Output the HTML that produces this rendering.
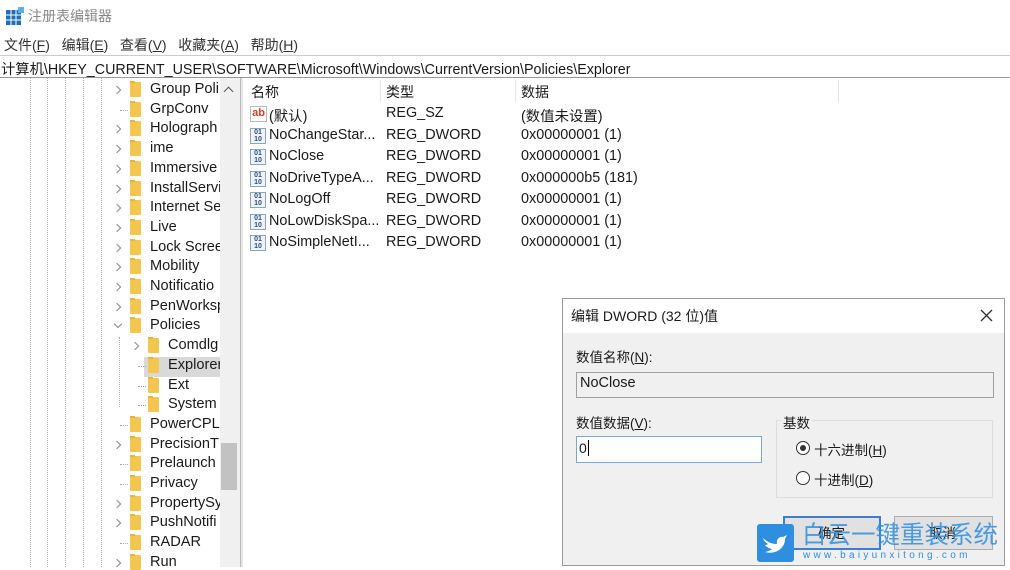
<!DOCTYPE html>
<html><head><meta charset="utf-8"><style>
*{margin:0;padding:0;box-sizing:border-box}
body{width:1010px;height:567px;overflow:hidden;background:#fff;font-family:"Liberation Sans","Noto Sans CJK SC",sans-serif;font-size:14px;color:#1a1a1a;position:relative}
.a{position:absolute;white-space:nowrap}
.f{position:absolute;width:11px;height:15px;background:#f3c74f;border-radius:1px}
.f:before{content:"";position:absolute;left:0;top:-1px;width:5px;height:2px;background:#e7b53c}
.ch{position:absolute;width:6px;height:6px;border-right:1.3px solid #888;border-bottom:1.3px solid #888;transform:rotate(-45deg)}
.vl{position:absolute;top:78px;height:489px;border-left:1px dotted #aaa}
.ic{position:absolute;width:16px;height:16px;border:1px solid #8aa;background:#eef3fb;font-size:7px;line-height:7px;color:#2a4d8a;font-weight:bold;text-align:center}
</style></head><body>
<svg class="a" style="left:6px;top:7px" width="18" height="18"><rect x="0" y="3" width="15" height="15" fill="#1f6fb7"/><g stroke="#fff" stroke-width="1"><line x1="5" y1="3" x2="5" y2="18"/><line x1="10" y1="3" x2="10" y2="18"/><line x1="0" y1="8" x2="15" y2="8"/><line x1="0" y1="13" x2="15" y2="13"/></g><rect x="12" y="0" width="6" height="6" fill="#5ab0e8"/></svg>
<div class="a" style="left:28px;top:6px;color:#888;font-size:14px">注册表编辑器</div>
<div class="a" style="left:4px;top:35px;font-size:14px;color:#333">文件(<u>F</u>)&nbsp;&nbsp;&nbsp;编辑(<u>E</u>)&nbsp;&nbsp;&nbsp;查看(<u>V</u>)&nbsp;&nbsp;&nbsp;收藏夹(<u>A</u>)&nbsp;&nbsp;&nbsp;帮助(<u>H</u>)</div>
<div class="a" style="left:0;top:55px;width:1010px;height:23px;border-top:1px solid #ccc;border-bottom:1px solid #999"></div>
<div class="a" style="left:1px;top:58px;font-size:14.3px">计算机\HKEY_CURRENT_USER\SOFTWARE\Microsoft\Windows\CurrentVersion\Policies\Explorer</div>
<div class="vl" style="left:30px"></div><div class="vl" style="left:47px"></div><div class="vl" style="left:65px"></div><div class="vl" style="left:83px"></div><div class="vl" style="left:101px"></div>
<div class="a" style="left:119px;top:337px;height:70px;border-left:1px dotted #aaa"></div>
<div class="a" style="left:144px;top:357px;width:76px;height:20px;background:#d9d9d9"></div>
<div id="tree" style="font-size:14.6px"></div>
<div class="a" style="left:220px;top:78px;width:20px;height:489px;background:#f0f0f0"></div>
<div class="a" style="left:221px;top:443px;width:16px;height:47px;background:#c2c2c2"></div>
<div class="a" style="left:225px;top:88px;width:7px;height:7px;border-left:1.5px solid #555;border-top:1.5px solid #555;transform:rotate(45deg)"></div>
<div class="a" style="left:240px;top:78px;width:3px;height:489px;background:#e6e6e6;border-left:1px solid #bbb"></div>
<div class="a" style="left:251px;top:82px">名称</div>
<div class="a" style="left:386px;top:82px">类型</div>
<div class="a" style="left:521px;top:82px">数据</div>
<div class="a" style="left:380px;top:80px;height:22px;border-left:1px solid #e5e5e5"></div>
<div class="a" style="left:515px;top:80px;height:22px;border-left:1px solid #e5e5e5"></div>
<div class="a" style="left:838px;top:80px;height:22px;border-left:1px solid #e5e5e5"></div>
<div id="list" style="font-size:14.4px"></div>
<div class="a" style="left:562px;top:298px;width:443px;height:268px;background:#f0f0f0;border:1px solid #9a9a9a"></div>
<div class="a" style="left:563px;top:299px;width:441px;height:34px;background:#fff"></div>
<div class="a" style="left:571px;top:306px;font-size:14px">编辑 DWORD (32 位)值</div>
<svg class="a" style="left:980px;top:309px" width="13" height="13"><path d="M1 1L12 12M12 1L1 12" stroke="#333" stroke-width="1.3"/></svg>
<div class="a" style="left:576px;top:346px;font-size:13.5px">数值名称(<u>N</u>):</div>
<div class="a" style="left:576px;top:372px;width:418px;height:26px;background:#f0f0f0;border:1px solid #a0a0a0"></div>
<div class="a" style="left:580px;top:375px;font-size:14.5px">NoClose</div>
<div class="a" style="left:576px;top:412px;font-size:13.5px">数值数据(<u>V</u>):</div>
<div class="a" style="left:576px;top:436px;width:186px;height:27px;background:#fff;border:1px solid #7aa7d6"></div>
<div class="a" style="left:579px;top:440px;font-size:14px">0<span style="border-left:1px solid #000;margin-left:1px"></span></div>
<div class="a" style="left:776px;top:420px;width:217px;height:78px;border:1px solid #dcdcdc"></div>
<div class="a" style="left:781px;top:412px;font-size:13.5px;background:#f0f0f0;padding:0 2px">基数</div>
<div class="a" style="left:796px;top:441px;width:14px;height:14px;border-radius:50%;border:1px solid #333;background:#fff"></div>
<div class="a" style="left:800px;top:445px;width:6px;height:6px;border-radius:50%;background:#333"></div>
<div class="a" style="left:814px;top:439px;font-size:13.5px">十六进制(<u>H</u>)</div>
<div class="a" style="left:796px;top:471px;width:14px;height:14px;border-radius:50%;border:1px solid #333;background:#fff"></div>
<div class="a" style="left:814px;top:469px;font-size:13.5px">十进制(<u>D</u>)</div>
<div class="a" style="left:783px;top:516px;width:98px;height:34px;background:#e1e1e1;border:2px solid #3c7fd0"></div>
<div class="a" style="left:818px;top:522px;font-size:13.5px">确定</div>
<div class="a" style="left:894px;top:516px;width:99px;height:34px;background:#e1e1e1;border:1px solid #adadad"></div>
<div class="a" style="left:929px;top:522px;font-size:13.5px">取消</div>
<div class="a" style="left:757px;top:524px;width:37px;height:38px;background:#2e8fe0;border-radius:3px"></div>
<svg class="a" style="left:760px;top:530px" width="30" height="26"><path d="M3 8C8 13 13 14 17 14C16 10 19 6 23 7L27 5L25 9C25 18 16 25 5 22C10 21 12 19 12 19C7 18 5 15 5 15C7 15 8 14 8 14C4 12 3 8 3 8Z" fill="#fff"/></svg>
<div class="a" style="left:802px;top:521px;font-size:24.5px;line-height:30px;color:#2e8fe0;opacity:.85">白云一键重装系统</div>
<div class="a" style="left:803px;top:550px;font-size:10px;color:#2e8fe0;letter-spacing:3.3px">www.baiyunxitong.com</div>
<script>
var t=[["Group Poli",1,0],["GrpConv",0,0],["Holograph",1,0],["ime",1,0],["Immersive",1,0],["InstallServi",1,0],["Internet Se",1,0],["Live",1,0],["Lock Scree",1,0],["Mobility",1,0],["Notificatio",1,0],["PenWorksp",1,0],["Policies",2,0],["Comdlg",1,1],["Explorer",0,1],["Ext",0,1],["System",0,1],["PowerCPL",0,0],["PrecisionT",1,0],["Prelaunch",0,0],["Privacy",0,0],["PropertySy",1,0],["PushNotifi",1,0],["RADAR",0,0],["Run",1,0]];
var h="";t.forEach(function(r,i){var y=90+i*19.7,o=r[2]?18:0;
if(r[1]==1)h+='<div class="ch" style="left:'+(114+o)+'px;top:'+(y-3)+'px"></div>';
else if(r[1]==2)h+='<div class="ch" style="left:115px;top:'+(y-5)+'px;transform:rotate(45deg)"></div>';
else h+='<div class="a" style="left:'+(120+o)+'px;top:'+y+'px;width:8px;border-top:1px dotted #aaa"></div>';
h+='<div class="f" style="left:'+(130+o)+'px;top:'+(y-8)+'px"></div><div class="a" style="left:'+(150+o)+'px;top:'+(y-9)+'px;width:'+(70-o)+'px;overflow:hidden">'+r[0]+'</div>';});
document.getElementById("tree").innerHTML=h;
var l=[["(默认)","REG_SZ","(数值未设置)",1],["NoChangeStar...","REG_DWORD","0x00000001 (1)"],["NoClose","REG_DWORD","0x00000001 (1)"],["NoDriveTypeA...","REG_DWORD","0x000000b5 (181)"],["NoLogOff","REG_DWORD","0x00000001 (1)"],["NoLowDiskSpa...","REG_DWORD","0x00000001 (1)"],["NoSimpleNetI...","REG_DWORD","0x00000001 (1)"]];
h="";l.forEach(function(r,i){var y=114+i*21.5;
h+=r[3]?'<div class="a" style="left:250px;top:'+(y-8)+'px;width:17px;height:16px;border:1px solid #bbb;background:#fff;color:#d2402a;font-weight:bold;font-size:11px;line-height:13px;text-align:center">ab</div>':'<div class="ic" style="left:250px;top:'+(y-8)+'px">01<br>10</div>';
h+='<div class="a" style="left:269px;top:'+(y-9)+'px">'+r[0]+'</div><div class="a" style="left:386px;top:'+(y-9)+'px">'+r[1]+'</div><div class="a" style="left:521px;top:'+(y-9)+'px">'+r[2]+'</div>';});
document.getElementById("list").innerHTML=h;
</script>
</body></html>
